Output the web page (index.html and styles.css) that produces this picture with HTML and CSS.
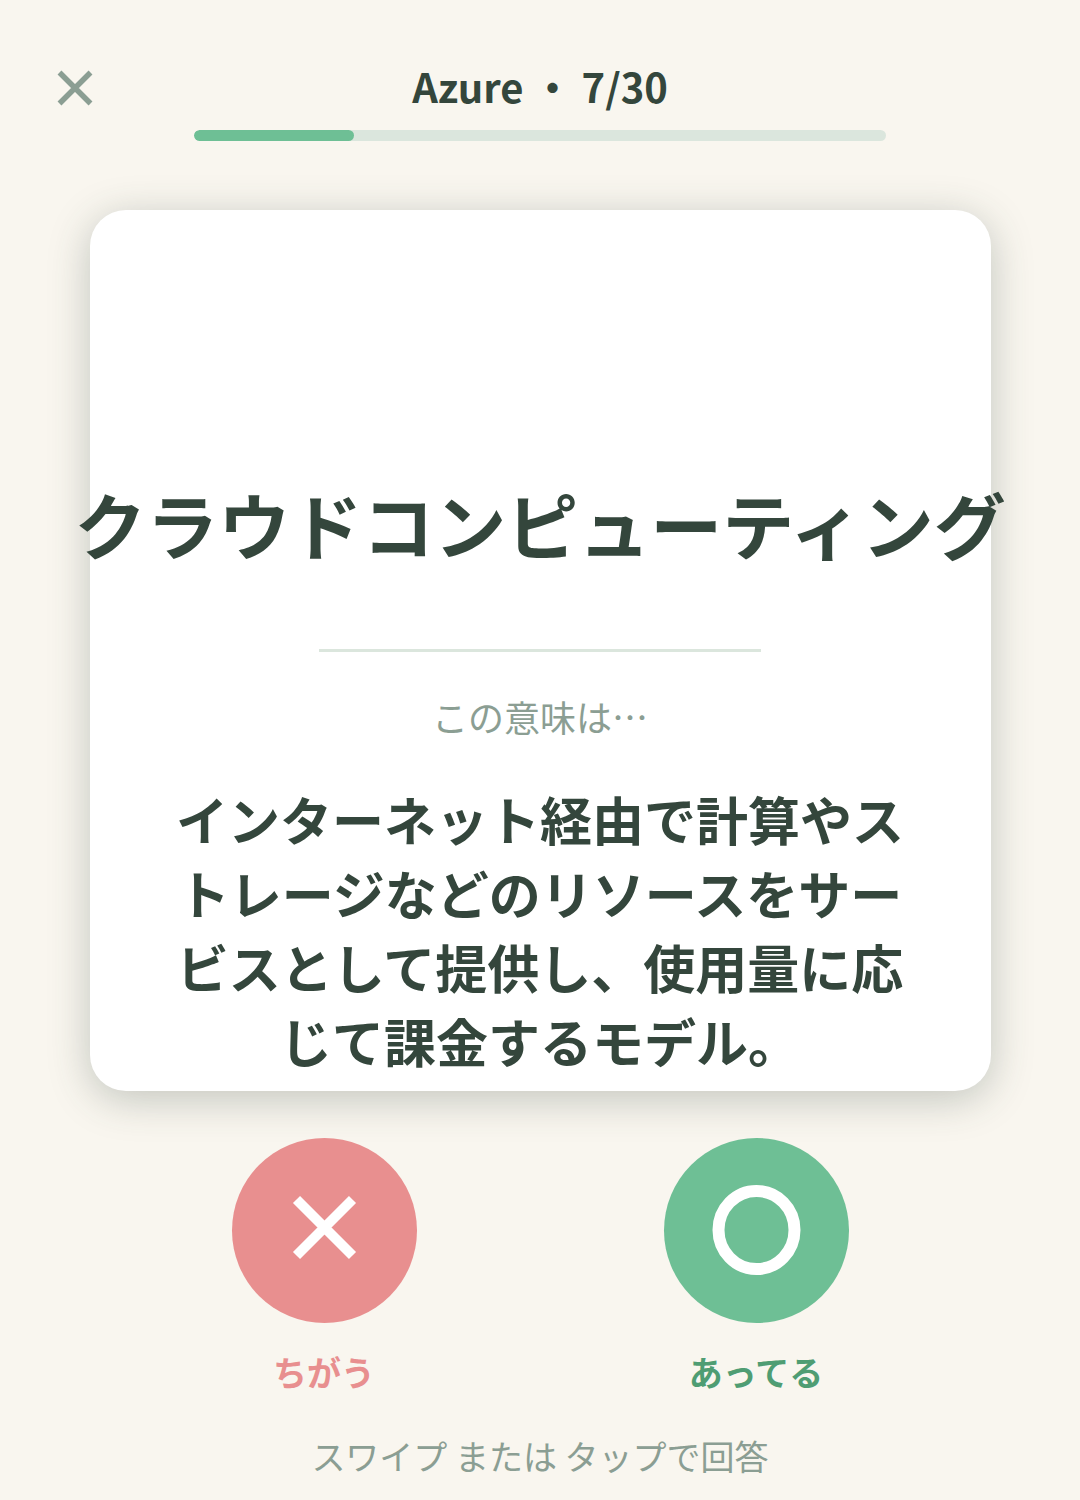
FILE: index.html
```html
<!DOCTYPE html>
<html lang="ja">
<head>
  <meta charset="UTF-8">
  <meta name="viewport" content="width=device-width, initial-scale=1.0">
  <title>Azure クイズ</title>
  <link rel="stylesheet" href="styles.css">
</head>
<body>
  <div id="app">
    <!-- Header -->
    <header class="quiz-header">
      <button class="close" type="button" aria-label="閉じる">
        <svg viewBox="0 0 36 40" aria-hidden="true">
          <path d="M2.5 6.5 L33.5 37.5 M33.5 6.5 L2.5 37.5"/>
        </svg>
      </button>
      <h1>Azure ・ 7/30</h1>
    </header>
    <div class="progress" role="progressbar" aria-label="進捗" aria-valuemin="0" aria-valuemax="30" aria-valuenow="7">
      <div class="progress-bar" style="width: 23.1%"></div>
    </div>

    <!-- Question card -->
    <main class="card">
      <h2 class="term">クラウドコンピューティング</h2>
      <hr class="divider">
      <p class="prompt">この意味は…</p>
      <p class="meaning">インターネット経由で計算やストレージなどのリソースをサービスとして提供し、使用量に応じて課金するモデル。</p>
    </main>

    <!-- Answer buttons -->
    <section class="answers">
      <div class="answer wrong">
        <button type="button" id="wrongButton" aria-labelledby="wrongLabel">
          <svg viewBox="0 0 185 185" aria-hidden="true">
            <path d="M64.5 61.5 L120.5 117.5 M120.5 61.5 L64.5 117.5"/>
          </svg>
        </button>
        <label for="wrongButton" id="wrongLabel">ちがう</label>
      </div>
      <div class="answer right">
        <button type="button" id="rightButton" aria-labelledby="rightLabel">
          <svg viewBox="0 0 185 185" aria-hidden="true">
            <ellipse cx="92.5" cy="92" rx="38" ry="39"/>
          </svg>
        </button>
        <label for="rightButton" id="rightLabel">あってる</label>
      </div>
    </section>

    <p class="hint">スワイプ または タップで回答</p>
  </div>
</body>
</html>
```

FILE: styles.css
```css
/* General reset */
* {
  margin: 0;
  padding: 0;
  box-sizing: border-box;
}

body {
  font-family: "Noto Sans CJK JP", sans-serif;
  background-color: #f9f6ef;
  color: #34463c;
}

#app {
  min-height: 100vh;
  padding: 56px 0 16px;
  display: flex;
  flex-direction: column;
  align-items: center;
}

button {
  border: none;
  background: none;
  cursor: pointer;
}

/* Header */
.quiz-header {
  width: 100%;
  padding: 0 57px;
  display: grid;
  grid-template-columns: 36px 1fr 36px;
  align-items: center;
}

.quiz-header h1 {
  font-size: 40px;
  line-height: 60px;
  font-weight: 700;
  text-align: center;
}

.close {
  width: 36px;
  height: 40px;
}

.close svg {
  display: block;
  stroke: #8b9e93;
  stroke-width: 5.5;
}

.progress {
  width: 64%;
  height: 11px;
  margin-top: 14px;
  border-radius: 6px;
  background-color: #dbe6dd;
  overflow: hidden;
}

.progress-bar {
  height: 100%;
  border-radius: 6px;
  background-color: #6ebf95;
}

/* Question card */
.card {
  width: calc(100% - 179px);
  min-height: 881px;
  margin-top: 69px;
  padding-bottom: 13px;
  border-radius: 36px;
  background-color: #fff;
  box-shadow: 0 8px 42px rgba(52, 70, 60, 0.28);
  display: flex;
  flex-direction: column;
  justify-content: flex-end;
  align-items: center;
}

.term {
  font-size: 72px;
  line-height: 104px;
  font-weight: 700;
  white-space: nowrap;
}

.divider {
  width: 49%;
  height: 3px;
  margin-top: 74px;
  border: none;
  background-color: #dbe6dd;
}

.prompt {
  margin-top: 38px;
  font-size: 36px;
  line-height: 52px;
  color: #8b9e93;
}

.meaning {
  width: 81%;
  margin-top: 40px;
  font-size: 52px;
  line-height: 74px;
  font-weight: 700;
  text-align: center;
}

/* Answer buttons */
.answers {
  width: 80%;
  margin-top: 47px;
  display: grid;
  grid-template-columns: 1fr 1fr;
}

.answer {
  display: flex;
  flex-direction: column;
  align-items: center;
}

.answer button {
  width: 185px;
  height: 185px;
  border-radius: 50%;
}

.answer svg {
  display: block;
  fill: none;
  stroke: #fff;
}

.answer label {
  margin-top: 24px;
  font-size: 34px;
  line-height: 50px;
  font-weight: 700;
}

.wrong button {
  background-color: #e88f8f;
}

.wrong svg {
  stroke-width: 10;
}

.wrong label {
  color: #e88f8f;
}

.right button {
  background-color: #6ebf95;
}

.right svg {
  stroke-width: 12;
}

.right label {
  color: #4f9d73;
}

.hint {
  margin-top: 34px;
  font-size: 34px;
  line-height: 50px;
  color: #8b9e93;
}
```
